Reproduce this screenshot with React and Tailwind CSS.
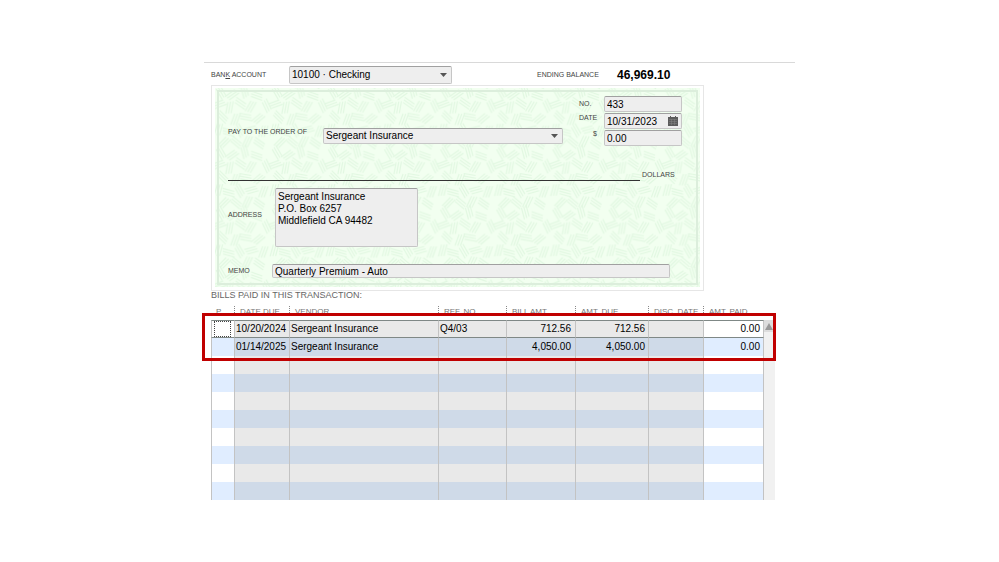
import React, { useState } from "react"

const columns = [
    { label: "P", width: 23 },
    { label: "DATE DUE", width: 55 },
    { label: "VENDOR", width: 149 },
    { label: "REF. NO.", width: 68 },
    { label: "BILL AMT.", width: 69 },
    { label: "AMT. DUE", width: 73 },
    { label: "DISC. DATE", width: 55 },
    { label: "AMT. PAID", width: 61 },
]

const bills = [
    { due: "10/20/2024", vendor: "Sergeant Insurance", ref: "Q4/03", amount: "712.56", amountDue: "712.56", discDate: "", paid: "0.00" },
    { due: "01/14/2025", vendor: "Sergeant Insurance", ref: "", amount: "4,050.00", amountDue: "4,050.00", discDate: "", paid: "0.00" },
]

const labelStyle = "text-[7px] leading-[8px] text-[#444444] whitespace-nowrap"
const fieldStyle = "rounded-[2px] border border-[#c6c6c6] border-t-[#a0a0a0] bg-[#eeeeee] text-[10px] leading-3 text-black outline-none"

function Select({ id, value, className }) {
    return (
        <div className={`relative ${className}`}>
            <select id={id} defaultValue={value} className={`${fieldStyle} block h-full w-full appearance-none pl-[2px] pr-4`}>
                <option>{value}</option>
            </select>
            <svg viewBox="0 0 7 4" className="pointer-events-none absolute right-[5px] top-1/2 h-1 w-[7px] -translate-y-1/2">
                <path d="M0 0h7L3.5 4z" fill="#555" />
            </svg>
        </div>
    )
}

// strokes of the security paper: x, y, angle
const hatches = [
    [7, 5, 60], [20, 8, -35], [35, 4, 75], [49, 9, 20],
    [5, 19, -20], [17, 23, 100], [30, 18, 35], [42, 22, -60], [61, 21, 65],
    [9, 34, 45], [24, 37, -70], [36, 34, 10], [51, 36, -40],
    [4, 49, -75], [16, 52, 15], [29, 50, 60], [43, 49, -15], [57, 51, 110],
    [11, 64, -45], [25, 64, 40], [38, 63, -65], [52, 65, 35],
]

// strokes near an edge continue on the other side of the tile
const wraps = [-1, 0, 1].flatMap((col) => [-1, 0, 1].map((row) => [col * 66, row * 71]))

function PaperPattern() {
    return (
        <svg className="absolute inset-0 h-full w-full" aria-hidden="true">
            <defs>
                <g id="hatches">
                    {hatches.map(([x, y, angle]) => (
                        <path
                            key={`${x}-${y}`}
                            d="M-8 -3H6M-7 0H7M-6 3H8"
                            transform={`translate(${x} ${y}) rotate(${angle})`}
                            stroke="#e1f8e1"
                            strokeWidth="1.3"
                        />
                    ))}
                </g>
                <pattern id="paper" width="66" height="71" patternUnits="userSpaceOnUse" patternTransform="scale(.85)">
                    <rect width="66" height="71" fill="#f2fff0" />
                    {wraps.map(([x, y]) => <use key={`${x}/${y}`} href="#hatches" x={x} y={y} />)}
                </pattern>
            </defs>
            <rect width="100%" height="100%" fill="url(#paper)" />
        </svg>
    )
}

function CalendarIcon() {
    return (
        <svg viewBox="0 0 10 10" className="h-[10px] w-[10px]">
            <path d="M0 1h2V0h1v1h4V0h1v1h2v9H0z" fill="#5c5c5c" />
            <path d="M1 3.5h8M1 5.5h8M1 7.5h8M3.5 3v6M6.5 3v6" stroke="#858585" strokeWidth=".5" />
        </svg>
    )
}

function Check() {
    return (
        <div className="max-w-[493px] border border-[#e6e6e6] bg-white px-[3px] pb-[3px] pt-[2px]">
            <div className="relative p-[2px]">
                <PaperPattern />
                <div className="relative border-2 border-[#dceedc] pb-[5px] pl-[9px] pr-[14px] pt-1">
                    <div className="flex items-end">
                        <div className="mb-[2px] flex h-4 flex-1">
                            <label htmlFor="payee" className={`${labelStyle} w-[95px]`}>PAY TO THE ORDER OF</label>
                            <Select id="payee" value="Sergeant Insurance" className="h-4 flex-1" />
                        </div>
                        <div className="ml-4 flex w-[18px] flex-col self-start">
                            <label htmlFor="number" className={`${labelStyle} py-1`}>NO.</label>
                            <label htmlFor="date" className={`${labelStyle} pb-1 pt-[2px]`}>DATE</label>
                            <label htmlFor="amount" className={`${labelStyle} py-1 text-right`}>$</label>
                        </div>
                        <div className="ml-[7px] flex w-[78px] flex-col gap-px">
                            <input id="number" defaultValue="433" className={`${fieldStyle} h-4 w-full px-[2px]`} />
                            <div className="relative">
                                <input id="date" defaultValue="10/31/2023" className={`${fieldStyle} block h-4 w-full px-[2px]`} />
                                <button aria-label="Pick a date" className="absolute right-1 top-[3px]"><CalendarIcon /></button>
                            </div>
                            <input id="amount" defaultValue="0.00" className={`${fieldStyle} h-4 w-full px-[2px]`} />
                        </div>
                    </div>

                    <div className="mt-[25px] flex h-[10px]">
                        <div className="flex-1 border-b border-[#333333]"></div>
                        <span className={`${labelStyle} ml-[2px] w-10`}>DOLLARS</span>
                    </div>

                    <div className="mt-[7px] flex items-center">
                        <label htmlFor="address" className={`${labelStyle} w-[47px] pb-1.5`}>ADDRESS</label>
                        <textarea
                            id="address"
                            className={`${fieldStyle} h-[59px] w-[143px] resize-none px-[2px] pt-[2px]`}
                            defaultValue={"Sergeant Insurance\nP.O. Box 6257\nMiddlefield CA 94482"}
                        />
                    </div>

                    <div className="mt-[17px] flex items-center">
                        <label htmlFor="memo" className={`${labelStyle} w-11`}>MEMO</label>
                        <input id="memo" defaultValue="Quarterly Premium - Auto" className={`${fieldStyle} mr-3 h-[14px] flex-1 px-[2px]`} />
                    </div>
                </div>
            </div>
        </div>
    )
}

function BillRow({ bill, index }) {
    const [checked, setChecked] = useState(false)
    const odd = index % 2 === 1
    const edge = odd ? "bg-[#e0edff]" : "bg-white"
    const middle = `border-l border-l-[#c3c3c3] ${odd ? "bg-[#cfdae8]" : "bg-[#e9e9e9]"}`
    const outline = index === 0 ? "border-y border-y-[#7f8886]" : ""

    return (
        <tr className="h-[18px]">
            <td className={`${edge} ${outline} border-l border-l-[#c3c3c3] p-0`}>
                {index === 0 && (
                    <input
                        type="checkbox"
                        aria-label="Select bill"
                        checked={checked}
                        onChange={(e) => { setChecked(e.target.checked) }}
                        className="ml-[2px] block h-4 w-[17px] appearance-none border border-dotted border-[#444444] bg-white checked:bg-[#7f8886]"
                    />
                )}
            </td>
            <td className={`${middle} ${outline} p-0 pl-[1px]`}>{bill?.due}</td>
            <td className={`${middle} ${outline} p-0 pl-[1px]`}>{bill?.vendor}</td>
            <td className={`${middle} ${outline} p-0 pl-[1px]`}>{bill?.ref}</td>
            <td className={`${middle} ${outline} p-0 pr-1 text-right`}>{bill?.amount}</td>
            <td className={`${middle} ${outline} p-0 pr-[3px] text-right`}>{bill?.amountDue}</td>
            <td className={`${middle} ${outline} p-0`}>{bill?.discDate}</td>
            <td className={`${edge} ${outline} border-x border-x-[#c3c3c3] p-0 pr-[3px] text-right`}>{bill?.paid}</td>
        </tr>
    )
}

function BillsTable() {
    const rows = Array.from({ length: 10 }, (_, i) => bills[i])

    return (
        <div className="relative mr-5 flex items-end">
            <table className="w-full flex-1 table-fixed border-separate border-spacing-0 text-[10px] leading-3 text-black">
                <colgroup>
                    {columns.map((col) => <col key={col.label} style={{ width: `${(col.width / 553) * 100}%` }} />)}
                </colgroup>
                <thead>
                    <tr className="h-5">
                        {columns.map((col, i) => (
                            <th key={col.label} className="p-0 text-left align-top text-[8px] font-normal text-[#777777]">
                                <div className={`mt-[6px] h-[7px] whitespace-nowrap pl-[5px] leading-3 ${i > 0 ? "border-l border-dotted border-[#888888]" : ""}`}>{col.label}</div>
                            </th>
                        ))}
                    </tr>
                </thead>
                <tbody>
                    {rows.map((bill, i) => <BillRow key={i} bill={bill} index={i} />)}
                </tbody>
            </table>
            <div className="h-[180px] w-[11px] bg-[#f1f1f1]">
                <button aria-label="Scroll up" className="flex h-3 w-[10px] items-center justify-center bg-[#dddddd]">
                    <svg viewBox="0 0 8 7" className="h-[7px] w-2"><path d="M4 0l4 7H0z" fill="#999" /></svg>
                </button>
            </div>
            <div className="pointer-events-none absolute -left-[9px] -right-px top-[13px] h-12 border-[3px] border-[#c00000]"></div>
        </div>
    )
}

function App() {
    return (
        <div className="min-h-screen w-full bg-white pt-[62px] font-['Liberation_Sans',Arial,sans-serif]">
            <main className="mx-auto w-full max-w-[591px] border-t border-[#d9d9d9] pl-[7px]">
                <div className="flex items-center pb-px pt-[3px]">
                    <label htmlFor="account" className={`${labelStyle} w-[78px]`}>BAN<u>K</u> ACCOUNT</label>
                    <Select id="account" value="10100 · Checking" className="h-[18px] w-[163px]" />
                    <span className={`${labelStyle} ml-[85px] w-20`}>ENDING BALANCE</span>
                    <span className="text-[12px] font-bold leading-4 text-black">46,969.10</span>
                </div>
                <Check />
                <h2 className="text-[9px] leading-[9px] text-[#666666]">BILLS PAID IN THIS TRANSACTION:</h2>
                <BillsTable />
            </main>
        </div>
    )
}

export default App
